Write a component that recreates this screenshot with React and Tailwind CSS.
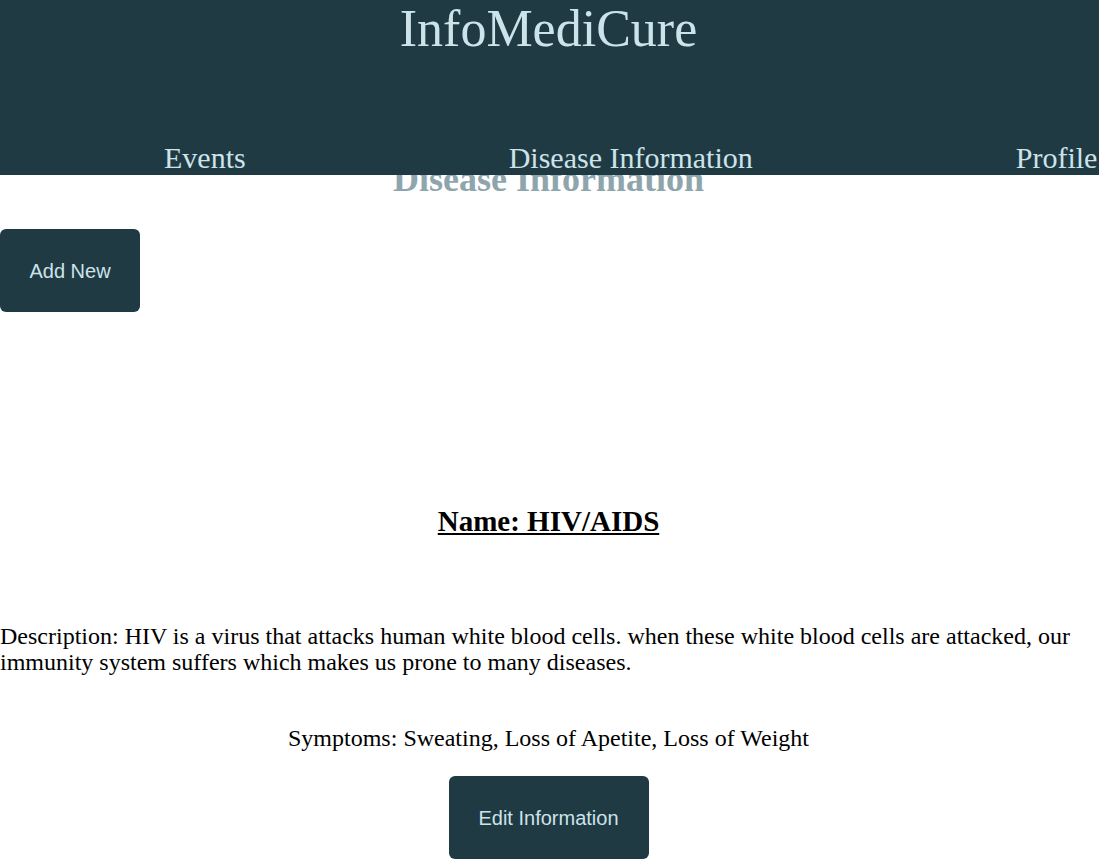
import React from 'react';

const serif = { fontFamily: '"Liberation Serif", "Times New Roman", serif' };
const sans = { fontFamily: '"Liberation Sans", Arial, sans-serif' };

const Header = () => {
  return (
    <header className="relative z-10 h-[175px] bg-[#1f3a42] text-[#cde3ea]" style={serif}>
      {/* Titre */}
      <h1 className="text-center text-[52px] leading-[58px] pr-[2px]">InfoMediCure</h1>

      {/* Navigation */}
      <nav className="flex items-end h-[117px] text-[30px] leading-[34px] whitespace-nowrap">
        <a href="#" className="ml-[164px]">Events</a>
        <a href="#" className="ml-[263px]">Disease Information</a>
        <a href="#" className="ml-[263px]">Profile</a>
      </nav>
    </header>
  );
};

const Button = ({ children, className }) => (
  <button
    className={`bg-[#1f3a42] text-[#cde3ea] text-[20px] rounded-[6px] h-[83px] ${className}`}
    style={sans}
  >
    {children}
  </button>
);

export default function App() {
  return (
    <div className="bg-white min-h-[866px] overflow-hidden" style={serif}>
      <Header />
      <h2 className="relative -mt-[16px] text-center text-[36px] leading-[40px] font-bold text-[#8fa5ad] pr-[2px]">
        Disease Information
      </h2>

      <div className="mt-[30px]">
        <Button className="w-[140px]">Add New</Button>
      </div>

      <div className="mt-[193px] text-black pr-[2px]">
        <h3 className="text-center text-[29px] leading-[32px] font-bold underline">Name: HIV/AIDS</h3>
        <p className="mt-[86px] text-[24px] leading-[26px]">
          Description: HIV is a virus that attacks human white blood cells. when these white blood cells are attacked, our immunity system suffers which makes us prone to many diseases.
        </p>
        <p className="mt-[50px] text-center text-[24px] leading-[26px]">
          Symptoms: Sweating, Loss of Apetite, Loss of Weight
        </p>
        <div className="mt-[25px] flex justify-center">
          <Button className="w-[200px]">Edit Information</Button>
        </div>
      </div>
    </div>
  );
}
